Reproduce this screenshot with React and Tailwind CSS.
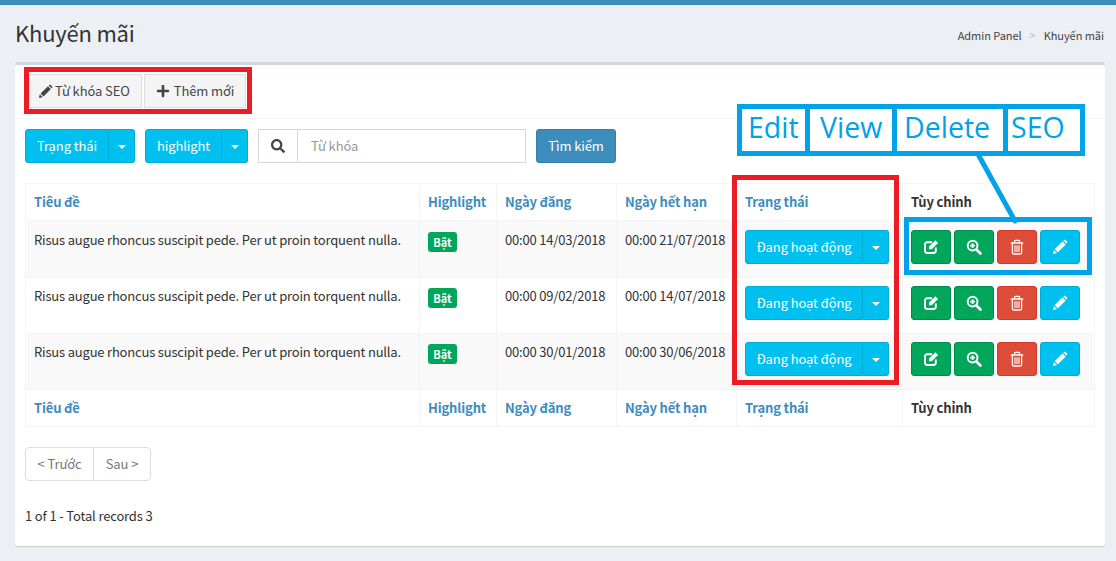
import { FaPlus, FaSearch } from 'react-icons/fa';

const FONT = "font-['Noto_Sans_CJK_SC','Noto_Sans',sans-serif]";

const rows = [
  { start: '00:00 14/03/2018', end: '00:00 21/07/2018', h: 'h-[57px]', pad: 'pt-[9px]', stripe: true },
  { start: '00:00 09/02/2018', end: '00:00 14/07/2018', h: 'h-[56px]', pad: 'pt-[8px]', stripe: false },
  { start: '00:00 30/01/2018', end: '00:00 30/06/2018', h: 'h-[56px]', pad: 'pt-[8px]', stripe: true },
];

// FontAwesome 4 style glyphs, the react-icons ones are too thin
const PencilIcon = ({ size = 16 }) => (
  <svg width={size} height={size} viewBox="0 0 16 16" fill="currentColor">
    <path d="M1 15l.9-4 3.1 3.1z" />
    <path d="M2.8 10.1 10.6 2.3l3.1 3.1-7.8 7.8z" />
    <path d="M11.4 1.5l.6-.5c.5-.4 1.1-.4 1.5 0l1.5 1.5c.4.4.4 1 0 1.5l-.5.6z" />
  </svg>
);

const EditIcon = () => (
  <svg width="16" height="16" viewBox="0 0 16 16" fill="none" stroke="currentColor">
    <path d="M9 3.2H4.2A2.2 2.2 0 0 0 2 5.4v6.4A2.2 2.2 0 0 0 4.2 14h6.4a2.2 2.2 0 0 0 2.2-2.2V8.4" strokeWidth="1.9" />
    <path d="M6 10.3V7.6L12.4 1.2l2.7 2.7-6.4 6.4z" fill="currentColor" stroke="none" />
  </svg>
);

const ZoomIcon = () => (
  <svg width="16" height="16" viewBox="0 0 16 16" fill="none" stroke="currentColor">
    <circle cx="6.6" cy="6.6" r="4.9" strokeWidth="2" />
    <path d="M10.4 10.4l4 4" strokeWidth="2.8" strokeLinecap="round" />
    <path d="M6.6 4.2v4.8M4.2 6.6h4.8" strokeWidth="1.7" />
  </svg>
);

const TrashIcon = () => (
  <svg width="16" height="16" viewBox="0 0 16 16" fill="none" stroke="currentColor">
    <path d="M1.8 4h12.4" strokeWidth="1.5" />
    <path d="M5.5 3.8V2.2c0-.5.4-.8.8-.8h3.4c.4 0 .8.3.8.8v1.6" strokeWidth="1.3" />
    <path d="M3.4 4v9.6c0 .8.5 1.4 1.2 1.4h6.8c.7 0 1.2-.6 1.2-1.4V4" strokeWidth="1.3" />
    <path d="M6 6.2v6.8M8 6.2v6.8M10 6.2v6.8" strokeWidth="1.1" />
  </svg>
);

const DropButton = ({ label, mainW, caretW }) => (
  <div className="flex h-[34px] text-[13px] tracking-[-0.1px] text-white">
    <div className={`${mainW} flex items-center justify-center rounded-l-[3px] border border-[#00acd6] bg-[#00c0ef]`}>{label}</div>
    <div className={`${caretW} flex items-center justify-center rounded-r-[3px] border border-l-0 border-[#00acd6] bg-[#00c0ef]`}>
      <span className="mt-[1px] border-x-[4px] border-t-[4px] border-x-transparent border-t-white" />
    </div>
  </div>
);

const ActionButton = ({ icon: Icon, className }) => (
  <div className={`flex h-[34px] w-[40px] items-center justify-center rounded-[3px] border text-white ${className}`}>
    <Icon />
  </div>
);

const Th = ({ children, dark }) => (
  <th className={`border border-[#f4f4f4] px-2 text-left align-middle text-[13px] tracking-[-0.15px] font-bold ${dark ? 'text-[#333]' : 'text-[#3c8dbc]'}`}>
    {children}
  </th>
);

const HeadRow = ({ h }) => (
  <tr className={h}>
    <Th>Tiêu đề</Th>
    <Th>Highlight</Th>
    <Th>Ngày đăng</Th>
    <Th>Ngày hết hạn</Th>
    <Th>Trạng thái</Th>
    <Th dark>Tùy chỉnh</Th>
  </tr>
);

const Td = ({ children, pad }) => (
  <td className={`border border-[#f4f4f4] px-2 align-top text-[13px] tracking-[-0.19px] leading-[20px] text-[#333] ${pad}`}>{children}</td>
);

const Note = ({ children, className }) => (
  <div className={`flex items-center pb-[5px] text-[28.5px] leading-none text-[#00a2e8] font-['Open_Sans',sans-serif] ${className}`}>{children}</div>
);

export default function App() {
  return (
    <div className={`relative h-[561px] w-[1116px] overflow-hidden bg-[#ecf0f5] ${FONT}`}>
      <div className="h-[5px] bg-[#3c8dbc]" />

      {/* Page header */}
      <div className="flex h-[57px] items-center justify-between pl-[15px] pr-[12px]">
        <h1 className="-mt-[4px] text-[22px] leading-none tracking-[-0.2px] text-[#333]">Khuyến mãi</h1>
        <div className="mt-[3px] flex items-center text-[11px] tracking-[-0.05px] text-[#444]">
          <span>Admin Panel</span>
          <span className="px-[8px] text-[#bbb]">&gt;</span>
          <span>Khuyến mãi</span>
        </div>
      </div>

      {/* Main box */}
      <div className="mx-[15px] h-[484px] w-[1090px] rounded-[3px] border-t-[3px] border-[#d2d6de] bg-white shadow-[0_1px_1px_rgba(0,0,0,0.15)]">
        <div className="flex h-[54px] gap-[2px] border-b border-[#f4f4f4] pl-[14px] pt-[9px]">
          <div className="flex h-[34px] w-[113px] items-center gap-[2px] border border-[#ddd] bg-[#f4f4f4] pl-[8px] text-[13px] tracking-[-0.1px] text-[#444]">
            <PencilIcon size={15} /> Từ khóa SEO
          </div>
          <div className="flex h-[34px] w-[102px] items-center justify-center gap-[4px] border border-[#ddd] bg-[#f4f4f4] text-[13px] tracking-[-0.1px] text-[#444]">
            <FaPlus className="text-[14px]" /> Thêm mới
          </div>
        </div>

        <div className="flex pl-[10px] pt-[10px]">
          <DropButton label="Trạng thái" mainW="w-[84px]" caretW="w-[26px]" />
          <div className="ml-[10px]">
            <DropButton label="highlight" mainW="w-[77px]" caretW="w-[26px]" />
          </div>
          <div className="ml-[10px] flex h-[34px] w-[268px] border border-[#d2d6de]">
            <div className="flex w-[39px] items-center justify-center border-r border-[#d2d6de] text-[14px] text-[#444]">
              <FaSearch />
            </div>
            <div className="flex items-center pl-[13px] text-[13px] tracking-[-0.1px] text-[#999]">Từ khóa</div>
          </div>
          <div className="ml-[10px] flex h-[34px] w-[80px] items-center justify-center rounded-[3px] border border-[#367fa9] bg-[#3c8dbc] text-[13px] tracking-[-0.1px] text-white">
            Tìm kiếm
          </div>
        </div>

        <div className="px-[10px] pt-[20px]">
          <table className="w-[1069px] table-fixed border-collapse">
            <colgroup>
              <col className="w-[394px]" />
              <col className="w-[77px]" />
              <col className="w-[120px]" />
              <col className="w-[120px]" />
              <col className="w-[166px]" />
              <col className="w-[192px]" />
            </colgroup>
            <thead>
              <HeadRow h="h-[37px]" />
            </thead>
            <tbody>
              {rows.map((r) => (
                <tr key={r.start} className={`${r.h} ${r.stripe ? 'bg-[#f9f9f9]' : ''}`}>
                  <Td pad={r.pad}>Risus augue rhoncus suscipit pede. Per ut proin torquent nulla.</Td>
                  <Td pad={r.pad}>
                    <span className="mt-[2px] block h-[20px] w-[29px] rounded-[3px] bg-[#00a65a] text-center text-[11px] font-bold leading-[20px] tracking-normal text-white">Bật</span>
                  </Td>
                  <Td pad={r.pad}><span className="whitespace-nowrap">{r.start}</span></Td>
                  <Td pad={r.pad}><span className="whitespace-nowrap">{r.end}</span></Td>
                  <Td pad={r.pad}><DropButton label="Đang hoạt động" mainW="w-[118px]" caretW="w-[26px]" /></Td>
                  <Td pad={r.pad}>
                    <div className="flex gap-[3px]">
                      <ActionButton icon={EditIcon} className="border-[#008d4c] bg-[#00a65a]" />
                      <ActionButton icon={ZoomIcon} className="border-[#008d4c] bg-[#00a65a]" />
                      <ActionButton icon={TrashIcon} className="border-[#d73925] bg-[#dd4b39]" />
                      <ActionButton icon={PencilIcon} className="border-[#00acd6] bg-[#00c0ef]" />
                    </div>
                  </Td>
                </tr>
              ))}
            </tbody>
            <tfoot>
              <HeadRow h="h-[37px]" />
            </tfoot>
          </table>

          <div className="mt-[20px] flex h-[34px] w-[126px] rounded-[4px] border border-[#ddd] text-[13px] tracking-[-0.1px] text-[#777]">
            <div className="flex w-[68px] items-center justify-center border-r border-[#ddd]">&lt; Trước</div>
            <div className="flex flex-1 items-center justify-center">Sau &gt;</div>
          </div>
          <p className="mt-[25px] text-[13px] tracking-[-0.15px] leading-[20px] text-[#333]">1 of 1 - Total records 3</p>
        </div>
      </div>

      {/* Annotations drawn over the screenshot */}
      <div className="absolute left-[24px] top-[67px] h-[47px] w-[228px] border-[5px] border-[#ed1c24]" />
      <div className="absolute left-[732px] top-[175px] h-[210px] w-[167px] border-[5px] border-[#ed1c24]" />
      <div className="absolute left-[904px] top-[217px] h-[58px] w-[188px] border-[5px] border-[#00a2e8]" />
      <div className="absolute left-[737px] top-[104px] flex h-[52px] w-[348px] border-[5px] border-[#00a2e8] bg-white">
        <Note className="w-[63px] pl-[6px]">Edit</Note>
        <Note className="w-[87px] border-l-[5px] border-[#00a2e8] pl-[10px]">View</Note>
        <Note className="w-[111px] border-l-[5px] border-[#00a2e8] pl-[7px]">Delete</Note>
        <Note className="flex-1 border-l-[5px] border-[#00a2e8] pl-[3px]">SEO</Note>
      </div>
      <svg className="absolute left-[970px] top-[154px]" width="56" height="76" viewBox="0 0 56 76">
        <line x1="9" y1="2" x2="45" y2="67" stroke="#00a2e8" strokeWidth="5" strokeLinecap="round" />
      </svg>
    </div>
  );
}
